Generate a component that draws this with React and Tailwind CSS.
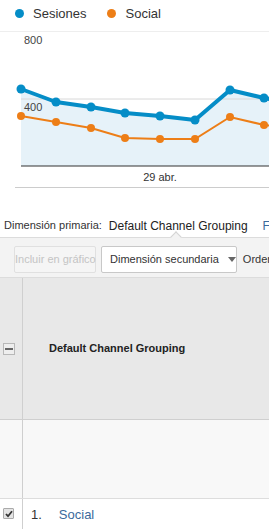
import React from 'react';

const blue = [[21, 89], [56, 102], [91, 107], [125, 113], [160, 116], [195, 120], [230, 90], [264, 98], [299, 104]];
const orange = [[21, 116], [56, 122], [91, 128], [125, 138], [160, 139], [195, 139], [230, 117], [264, 125], [299, 128]];

const toLine = (pts) => pts.map((p) => p.join(',')).join(' ');

function Chart() {
  const area = `M21,166 L${blue.map((p) => p.join(',')).join(' L')} L299,166 Z`;
  return (
    <svg width="269" height="155" viewBox="0 32 269 155" className="block">
      <path d={area} fill="#e6f2f9" />
      <line x1="21" y1="99" x2="269" y2="99" stroke="#d8d8d8" strokeWidth="1" />
      <line x1="21" y1="166" x2="269" y2="166" stroke="#333" strokeWidth="1.2" />
      <text x="24" y="44" fontSize="11" fill="#444">800</text>
      <text x="24" y="111" fontSize="11" fill="#444">400</text>
      <text x="160" y="181" fontSize="11" fill="#333" textAnchor="middle">29 abr.</text>
      <polyline points={toLine(orange)} fill="none" stroke="#ed7e17" strokeWidth="2" />
      {orange.map(([x, y], i) => (
        <circle key={i} cx={x} cy={y} r="4" fill="#ed7e17" />
      ))}
      <polyline points={toLine(blue)} fill="none" stroke="#058dc7" strokeWidth="4" strokeLinejoin="round" />
      {blue.map(([x, y], i) => (
        <circle key={i} cx={x} cy={y} r="4.5" fill="#058dc7" />
      ))}
    </svg>
  );
}

export default function App() {
  return (
    <div className="w-[269px] h-[529px] overflow-hidden bg-white font-['Liberation_Sans',Arial,sans-serif] text-[#333]">
      {/* Legend */}
      <div className="h-[32px] border-b border-[#eee] flex items-center pb-[4px] text-[13px] text-[#333] whitespace-nowrap">
        <span className="ml-[15px] w-[9px] h-[9px] rounded-full bg-[#058dc7]" />
        <span className="ml-[9px]">Sesiones</span>
        <span className="ml-[21px] w-[9px] h-[9px] rounded-full bg-[#ed7e17]" />
        <span className="ml-[9px]">Social</span>
      </div>

      <Chart />
      <div className="ml-[15px] h-px bg-[#ccc]" />

      {/* Primary dimension */}
      <div className="h-[49px] flex items-center pt-[26px] whitespace-nowrap">
        <span className="ml-[4px] text-[11px] text-[#333]">Dimensión primaria:</span>
        <span className="ml-[7px] text-[12px] text-[#222]">Default Channel Grouping</span>
        <span className="ml-[15px] text-[12px] text-[#3a6a9c]">F</span>
      </div>

      {/* Toolbar */}
      <div className="relative h-[41px] bg-[#f3f3f3] border-t border-b border-[#dcdcdc] flex items-start pt-[8px] text-[11px] whitespace-nowrap">
        <span className="absolute left-[172px] -top-[5px] w-[8px] h-[8px] rotate-45 bg-[#f3f3f3] border-l border-t border-[#d4d4d4]" />
        <button className="ml-[14px] w-[82px] h-[27px] rounded-[2px] border border-[#e0e0e0] bg-[#f5f5f5] text-[#c4c4c4] text-[11px] whitespace-nowrap">
          Incluir en gráfico
        </button>
        <button className="ml-[5px] w-[140px] h-[27px] rounded-[2px] border border-[#c8c8c8] bg-white text-[#333] text-[11px] flex items-center pl-[8px] whitespace-nowrap">
          Dimensión secundaria
          <svg width="8" height="5" viewBox="0 0 8 5" className="ml-[9px] shrink-0">
            <path d="M0 0 L8 0 L4 5 Z" fill="#666" />
          </svg>
        </button>
        <span className="ml-[6px] h-[27px] flex items-center text-[#333]">Orden</span>
      </div>

      {/* Table header */}
      <div className="flex h-[142px] bg-[#e8e8e8] border-b border-[#cfcfcf]">
        <div className="w-[23px] border-r border-[#cfcfcf] flex items-center">
          <span className="ml-[3px] w-[12px] h-[12px] border border-[#b8b8b8] bg-[#eee] flex items-center justify-center">
            <span className="w-[8px] h-[2px] bg-[#666]" />
          </span>
        </div>
        <div className="flex-1 flex items-center pl-[26px] text-[11px] font-bold text-[#222] whitespace-nowrap">
          Default Channel Grouping
        </div>
      </div>

      {/* Totals row */}
      <div className="flex h-[79px] bg-[#f8f8f8] border-b border-[#ddd]">
        <div className="w-[23px] border-r border-[#cfcfcf]" />
        <div className="flex-1" />
      </div>

      {/* Row 1 */}
      <div className="flex h-[34px] bg-white">
        <div className="w-[23px] border-r border-[#cfcfcf] flex items-start pt-[9px]">
          <span className="ml-[3px] w-[11px] h-[11px] border border-[#aaa] bg-[#e4e4e4] rounded-[1px] flex items-center justify-center">
            <svg width="8" height="8" viewBox="0 0 8 8">
              <path d="M1 4 L3 6.2 L7 1.2" fill="none" stroke="#333" strokeWidth="1.8" />
            </svg>
          </span>
        </div>
        <div className="flex items-start pt-[6px] text-[13px] whitespace-nowrap">
          <span className="ml-[8px] text-[#333]">1.</span>
          <span className="ml-[17px] text-[#3a6a9c]">Social</span>
        </div>
      </div>
    </div>
  );
}
